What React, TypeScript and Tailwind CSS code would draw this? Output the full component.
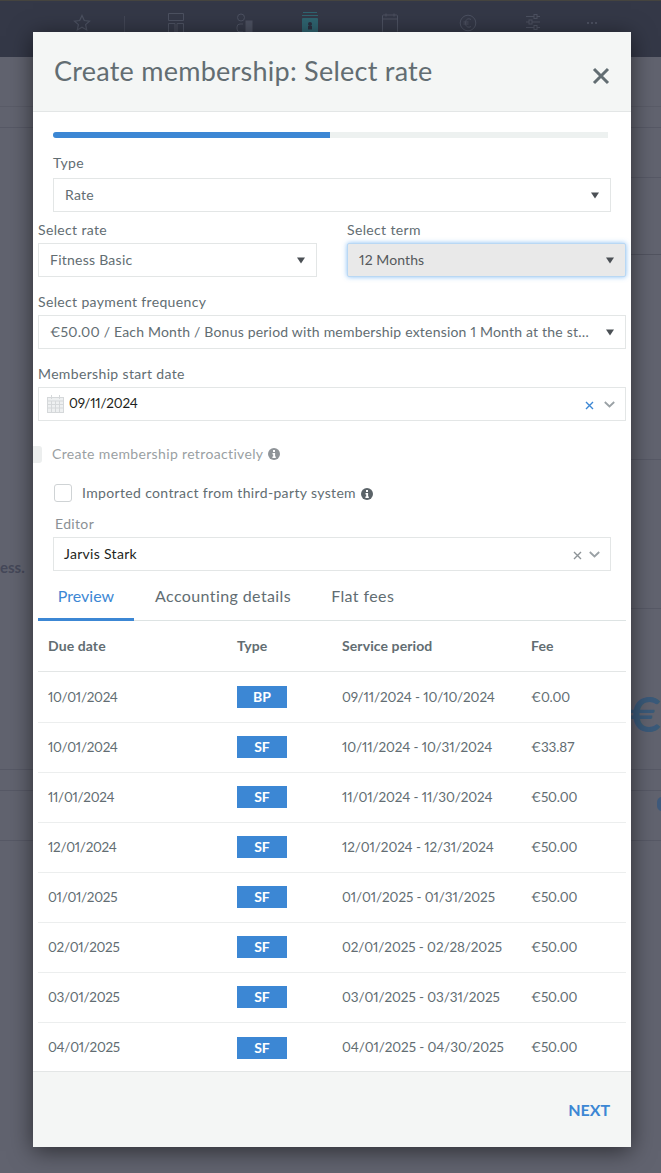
import { ReactNode } from 'react';

const rows = [
  ['10/01/2024', 'BP', '09/11/2024 - 10/10/2024', '€0.00'],
  ['10/01/2024', 'SF', '10/11/2024 - 10/31/2024', '€33.87'],
  ['11/01/2024', 'SF', '11/01/2024 - 11/30/2024', '€50.00'],
  ['12/01/2024', 'SF', '12/01/2024 - 12/31/2024', '€50.00'],
  ['01/01/2025', 'SF', '01/01/2025 - 01/31/2025', '€50.00'],
  ['02/01/2025', 'SF', '02/01/2025 - 02/28/2025', '€50.00'],
  ['03/01/2025', 'SF', '03/01/2025 - 03/31/2025', '€50.00'],
  ['04/01/2025', 'SF', '04/01/2025 - 04/30/2025', '€50.00'],
];

function Caret() {
  return (
    <svg width="8" height="7" viewBox="0 0 8 7" className="mt-[2px] shrink-0">
      <path d="M0 .5h8L4 6.500z" fill="#4b5055" />
    </svg>
  );
}

function Chevron() {
  return (
    <svg width="11" height="7" viewBox="0 0 11 7" fill="none" stroke="#9aa1a5" strokeWidth="1.800" className="shrink-0">
      <path d="M.8 1l4.700 4.500L10.200 1" />
    </svg>
  );
}

function Info() {
  return (
    <svg width="12" height="12" viewBox="0 0 12 12" className="mt-[2px] shrink-0">
      <circle cx="6" cy="6" r="6" fill="currentColor" />
      <rect x="5" y="2" width="2" height="2" fill="#fff" />
      <path d="M4.500 5h2.600v3.400h.7V10H4.400V8.400h.8V6.500h-.7z" fill="#fff" />
    </svg>
  );
}

function Label({ children, className = '' }: { children: ReactNode; className?: string }) {
  return <div className={`h-5 text-[14px] leading-5 tracking-[0.35px] text-[#626d72] ${className}`}>{children}</div>;
}

function SelectBox({ children, focused }: { children: ReactNode; focused?: boolean }) {
  return (
    <div
      className={
        focused
          ? 'flex h-[34px] items-center justify-between rounded-[2px] border border-[#b9d8f4] bg-[#e9e9e9] pb-[2px] pl-[11px] pr-[11px] text-[14px] tracking-[0.1px] text-[#55595c] shadow-[0_0_5px_rgba(90,165,240,0.7)]'
          : 'flex h-[34px] items-center justify-between border border-[#e3e6e6] bg-white pb-[2px] pl-[11px] pr-[11px] text-[14px] tracking-[0.25px] text-[#626d72]'
      }
    >
      {children}
    </div>
  );
}

function TopBar() {
  return (
    <div className="flex h-[57px] shrink-0 items-start border-t border-[#45443f] bg-[#343847] pt-[12px] text-[#4c5161]">
      <svg width="18" height="18" viewBox="0 0 18 18" fill="none" stroke="currentColor" strokeWidth="1.200" className="ml-[73px] mt-[1px] shrink-0">
        <path d="M9 1.500l2.300 5 5.200.6-3.900 3.500 1.100 5.300L9 13.200l-4.700 2.700 1.100-5.300L1.500 7.100l5.200-.6z" />
      </svg>
      <div className="ml-[33px] mt-[3px] h-[30px] w-px bg-[#424655]" />
      <svg width="20" height="20" viewBox="0 0 20 20" fill="none" stroke="currentColor" className="ml-[41px] shrink-0">
        <path d="M2.500 .5h15v7h-15zM2.500 10.500h6.500v9H2.500zM11 10.500h6.500v9H11z" />
      </svg>
      <svg width="20" height="20" viewBox="0 0 20 20" fill="none" stroke="currentColor" className="ml-[49px] shrink-0">
        <circle cx="6" cy="4.500" r="3.500" />
        <path d="M8 11H5a3 3 0 0 0-3 3v2a3 3 0 0 0 3 3h3" />
        <rect x="11" y="8" width="6" height="11" fill="currentColor" />
      </svg>
      <svg width="20" height="21" viewBox="0 0 20 21" className="ml-[45px] -mt-[1px] shrink-0">
        <path d="M3 .5h14M2 3.500h16" stroke="#2f6470" />
        <rect x="2" y="6" width="16" height="15" rx="1" fill="#2f6470" />
        <circle cx="10" cy="12" r="2" fill="#2c3040" />
        <rect x="8" y="14" width="4" height="3.500" fill="#2c3040" />
      </svg>
      <svg width="20" height="20" viewBox="0 0 20 20" fill="none" stroke="currentColor" className="ml-[60px] shrink-0">
        <rect x="2.500" y="2" width="15" height="17.500" rx="1" />
        <path d="M2.500 6h15M6 .5v3M14 .5v3" />
      </svg>
      <svg width="20" height="20" viewBox="0 0 20 20" fill="none" stroke="currentColor" className="ml-[58px] shrink-0">
        <circle cx="10" cy="10" r="7.800" />
        <path d="M13 6.500c-2.500-1.500-5.500-.5-5.500 3.500s3 5 5.500 3.500M5.500 9h5M5.500 11h5" />
      </svg>
      <svg width="20" height="18" viewBox="0 0 20 18" fill="none" stroke="currentColor" className="ml-[45px] shrink-0">
        <path d="M3 3.500h14M3 9h14M3 14.500h14" />
        <rect x="11" y="1.500" width="3" height="4" fill="#343847" />
        <rect x="6" y="7" width="3" height="4" fill="#343847" />
        <rect x="11" y="12.500" width="3" height="4" fill="#343847" />
      </svg>
      <div className="ml-[44px] mt-[9px] flex gap-[2px]">
        <span className="h-[2px] w-[2px] bg-current" />
        <span className="h-[2px] w-[2px] bg-current" />
        <span className="h-[2px] w-[2px] bg-current" />
      </div>
    </div>
  );
}

function Backdrop() {
  return (
    <div className="flex h-[1173px] flex-col overflow-hidden bg-[#61636f]">
      <TopBar />
      <div className="mt-[49px] h-px shrink-0 bg-[#5a5c68]" />
      <div className="mt-[20px] h-px shrink-0 bg-[#575966]" />
      <div className="ml-[631px] mt-[49px] h-px shrink-0 bg-[#575966]" />
      <div className="ml-[631px] mt-[76px] h-px shrink-0 bg-[#525460]" />
      <div className="ml-[631px] mt-[204px] h-px shrink-0 bg-[#575966]" />
      <div className="mt-[97px] h-5 shrink-0 text-[15px] font-bold leading-5 text-[#454859]">ess.</div>
      <div className="ml-[631px] mt-[31px] h-px shrink-0 bg-[#575966]" />
      <div className="ml-[627px] mt-[85px] h-[40px] shrink-0 text-[48px] font-bold leading-[40px] text-[#3a5a7a]">€</div>
      <div className="mt-[35px] h-px shrink-0 bg-[#575966]" />
      <div className="mt-[20px] h-px shrink-0 bg-[#575966]" />
      <div className="ml-[657px] mt-[6px] h-[14px] w-[10px] shrink-0 rounded-full bg-[#3f5a7c]" />
      <div className="mt-[29px] h-px shrink-0 bg-[#575966]" />
    </div>
  );
}

export default function App() {
  return (
    <div className="relative h-[1173px] w-[661px] overflow-hidden font-['Lato',sans-serif] proportional-nums">
      <Backdrop />
      <div className="absolute left-[33px] top-[32px] flex h-[1115px] w-[598px] flex-col bg-white shadow-[0_4px_22px_rgba(0,0,0,0.55)]">
        <div className="flex h-[80px] shrink-0 items-start justify-between border-b border-[#e3e6e6] bg-[#f4f6f5] px-[21px]">
          <h1 className="mt-[22px] text-[27px] leading-[34px] tracking-[0.25px] text-[#626d72]">Create membership: Select rate</h1>
          <svg width="18" height="18" viewBox="0 0 18 18" stroke="#626d72" strokeWidth="3" className="mt-[35px]">
            <path d="M2 2l14 14M16 2L2 16" />
          </svg>
        </div>

        <div className="flex min-h-0 flex-1 flex-col px-[5px]">
          <div className="ml-[15px] mr-[18px] mt-[20px] h-[6px] shrink-0 overflow-hidden rounded-l-full bg-[#edf1f0]">
            <div className="h-full w-[277px] bg-[#3c87d4]" />
          </div>

          <div className="mx-[15px] mt-[15px]">
            <Label className="mb-[5px]">Type</Label>
            <SelectBox>
              <span>Rate</span>
              <Caret />
            </SelectBox>
          </div>

          <div className="mt-[8px] grid grid-cols-[279px_279px] gap-[30px]">
            <div>
              <Label className="mb-[3px]">Select rate</Label>
              <SelectBox>
                <span>Fitness Basic</span>
                <Caret />
              </SelectBox>
            </div>
            <div>
              <Label className="mb-[3px]">Select term</Label>
              <SelectBox focused>
                <span>12 Months</span>
                <Caret />
              </SelectBox>
            </div>
          </div>

          <div className="mt-[15px]">
            <Label className="mb-[3px]">Select payment frequency</Label>
            <SelectBox>
              <span className="whitespace-nowrap tracking-[0.2px]">€50.00 / Each Month / Bonus period with membership extension 1 Month at the st…</span>
              <Caret />
            </SelectBox>
          </div>

          <div className="mt-[15px]">
            <Label className="mb-[3px]">Membership start date</Label>
            <div className="flex h-[34px] items-center border border-[#e3e6e6] pl-[8px] pr-[10px] text-[13.5px] tracking-[-0.2px] text-[#1d1f21]">
              <svg width="17" height="18" viewBox="0 0 17 18" fill="none" stroke="#d5d8da" className="shrink-0">
                <rect x=".5" y="2.500" width="16" height="15" fill="#eef0f1" />
                <path d="M.5 6h16M.5 9.500h16M.5 13h16M4.500 6v11M8.500 6v11M12.500 6v11M4.500 0v4M12.500 0v4" />
              </svg>
              <span className="mb-[2px] ml-[5px] flex-1">09/11/2024</span>
              <svg width="9" height="9" viewBox="0 0 9 9" stroke="#3c87d4" strokeWidth="1.400" className="mr-[10px] mt-[3px]">
                <path d="M1 1l7 7M8 1L1 8" />
              </svg>
              <Chevron />
            </div>
          </div>

          <div className="relative mt-[23px] flex h-5 items-center pb-[2px] pl-[14px] text-[14px] tracking-[0.35px] text-[#9a9fa3]">
            <span className="absolute -left-[5px] top-[2px] h-[17px] w-[9px] rounded-r-[3px] bg-[#eceeee]" />
            <span>Create membership retroactively</span>
            <span className="ml-[5px] text-[#8f9498]"><Info /></span>
          </div>

          <div className="ml-[16px] mt-[19px] flex h-5 items-center text-[14px] tracking-[0.35px] text-[#626d72]">
            <span className="h-[18px] w-[18px] shrink-0 rounded-[3px] border border-[#cfd3d5] bg-white" />
            <span className="mb-[2px] ml-[10px]">Imported contract from third-party system</span>
            <span className="ml-[5px] text-[#5b6368]"><Info /></span>
          </div>

          <div className="mx-[15px] mt-[11px]">
            <Label className="mb-[3px] pl-[2px] !text-[#8b9195]">Editor</Label>
            <div className="flex h-[34px] items-center border border-[#e3e6e6] pl-[10px] pr-[10px] text-[14px] tracking-[0.3px] text-[#1d1f21]">
              <span className="mb-[2px] flex-1">Jarvis Stark</span>
              <svg width="9" height="9" viewBox="0 0 9 9" stroke="#8d9397" strokeWidth="1.400" className="mr-[7px] mt-[2px]">
                <path d="M1 1l7 7M8 1L1 8" />
              </svg>
              <Chevron />
            </div>
          </div>

          <div className="flex h-[50px] shrink-0 border-b border-[#dde3e3] text-[16px]">
            <div className="-mb-px flex w-[96px] items-center justify-center border-b-[3px] border-[#3c87d4] pt-[2px] text-[#3c87d4]">Preview</div>
            <div className="ml-[21px] flex items-center tracking-[0.4px] text-[#626d72]">Accounting details</div>
            <div className="ml-[40px] flex items-center tracking-[0.4px] text-[#626d72]">Flat fees</div>
          </div>

          <div className="min-h-0 flex-1 overflow-hidden">
            <div className="grid h-[51px] grid-cols-[189px_105px_189px_1fr] items-center border-b border-[#e3e6e6] pb-[2px] pl-[10px] text-[14px] font-bold tracking-[0.1px] text-[#626d72]">
              <span>Due date</span>
              <span>Type</span>
              <span>Service period</span>
              <span>Fee</span>
            </div>
            <div>
              {rows.map((row, i) => (
                <div
                  key={i}
                  className="grid h-[50px] grid-cols-[189px_105px_189px_1fr] items-center border-b border-[#eceeee] pb-px pl-[10px] text-[13.5px] text-[#626d72] first:h-[51px] first:pb-0 last:border-b-0"
                >
                  <span className="tracking-[-0.3px]">{row[0]}</span>
                  <span className="flex h-[22px] w-[50px] items-center justify-center bg-[#3c87d4] pb-px text-[14px] font-bold text-white">{row[1]}</span>
                  <span className="tracking-[-0.1px]">{row[2]}</span>
                  <span className="tracking-[-0.1px]">{row[3]}</span>
                </div>
              ))}
            </div>
          </div>
        </div>

        <div className="flex h-[76px] shrink-0 items-start justify-end border-t border-[#e3e6e6] bg-[#f4f6f5] pr-[21px] pt-[28px]">
          <button className="text-[16px] font-bold leading-5 text-[#3c87d4]">NEXT</button>
        </div>
      </div>
    </div>
  );
}
